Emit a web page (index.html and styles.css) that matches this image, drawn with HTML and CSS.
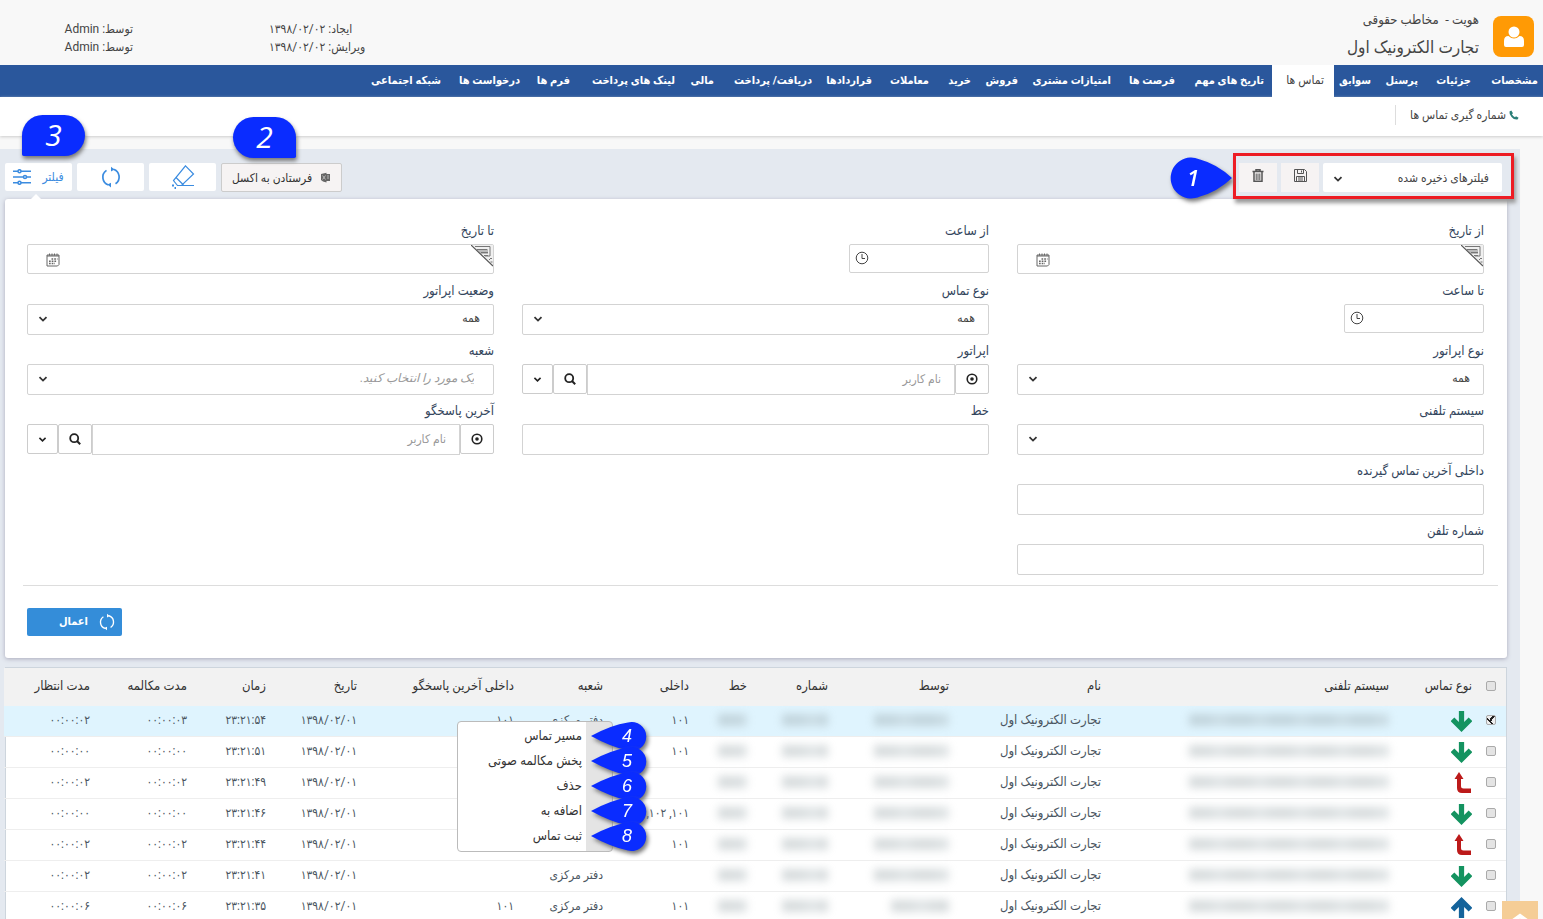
FILE: index.html
```
<!DOCTYPE html>
<html lang="fa" dir="rtl">
<head>
<meta charset="utf-8">
<title>تماس ها</title>
<link rel="stylesheet" href="styles.css">
</head>
<body>
<svg class="sprite" aria-hidden="true">
  <symbol id="chev" viewBox="0 0 10 8"><path d="M1.5 2.2 5 5.6 8.5 2.2" fill="none" stroke="currentColor" stroke-width="1.800"/></symbol>
  <symbol id="target" viewBox="0 0 12 12"><circle cx="6" cy="6" r="4.8" fill="none" stroke="currentColor" stroke-width="1.6"/><circle cx="6" cy="6" r="1.8" fill="currentColor"/></symbol>
  <symbol id="search" viewBox="0 0 12 12"><circle cx="5.2" cy="5.2" r="4" fill="none" stroke="currentColor" stroke-width="1.8"/><path d="m8 8 3.2 3.2" stroke="currentColor" stroke-width="2"/></symbol>
  <symbol id="cal" viewBox="0 0 14 14"><path d="M1 2h12v9.5L11.5 13H1z" fill="none" stroke="currentColor"/><path d="M1 3h12M3.500 .5v2M6 .5v2M8.500 .5v2M11 .5v2" stroke="currentColor"/><path d="M5.500 6h6M3 8.300h8M3 10.600h6" stroke="currentColor" stroke-width="1.500" stroke-dasharray="1.700 1"/></symbol>
  <symbol id="clock" viewBox="0 0 14 14"><circle cx="7" cy="7" r="5.8" fill="none" stroke="currentColor"/><path d="M7 3v4.500h3" fill="none" stroke="currentColor"/></symbol>
  <symbol id="corner" viewBox="0 0 22 22"><path d="M0 0h22v21z" fill="#f0f0f0"/><path d="M5 4h12v5h-7z" fill="#bbb"/><path d="M0 0 22 21" stroke="#555" stroke-width="1.200"/><path d="M4 1.500h15v9.500h-5M6 4.500h10M10 7.500h7M13 10.500h4M18 15l2-2 1 1M19.500 17h2" fill="none" stroke="#777"/></symbol>
  <symbol id="cycle" viewBox="0 0 20 22"><path d="M12.500 3.200A8.200 8.200 0 0 1 14.500 17.800M7.500 19A8.200 8.200 0 0 1 5.500 4.400" fill="none" stroke="currentColor" stroke-width="1.700"/><path d="M10 .8v4.600L13.500 3.500zM10 21.400v-4.600L6.500 18.600z" fill="currentColor"/></symbol>
  <symbol id="down" viewBox="0 0 20 20"><path d="M7.500 0h5v10.500l4.300-4.300L20.300 9.700 10 20 -.3 9.700 3.200 6.200 7.500 10.500z" fill="#149360"/></symbol>
  <symbol id="up" viewBox="0 0 20 20"><path d="M7.500 22V9.500L3.200 13.800 -.3 10.300 10 0l10.300 10.300-3.500 3.500-4.300-4.300V22z" fill="#14639b"/></symbol>
  <symbol id="miss" viewBox="0 0 20 22"><path d="M7 0l4.500 7H9v7q0 2.500 2.500 2.500H19V21h-9q-5 0-5-5V7H2.500z" fill="#bc1a1a"/></symbol>
  <symbol id="drop" viewBox="0 0 58 30"><path d="M0 14Q20 3 37 .5A14.500 14.500 0 1 1 37 28.500Q20 25 0 14z" fill="#0a2cff"/></symbol>
</svg>

<header class="head">
  <div class="avatar"><svg width="20" height="22" viewBox="0 0 20 22"><circle cx="10" cy="6" r="5.500" fill="#fff"/><path d="M0 19v-4q0-5 4.500-5Q10 15 15.500 10q4.500 0 4.500 5v4q0 2-2 2H2q-2 0-2-2z" fill="#fff"/></svg></div>
  <div class="identity">
    <p class="kind">هویت -&nbsp; مخاطب حقوقی</p>
    <h1>تجارت الکترونیک اول</h1>
  </div>
  <div class="meta made"><p>ایجاد: ۱۳۹۸/۰۲/۰۲</p><p>ویرایش: ۱۳۹۸/۰۲/۰۲</p></div>
  <div class="meta by"><p>توسط: Admin</p><p>توسط: Admin</p></div>
</header>

<nav class="tabs">
  <a href="#">مشخصات</a><a href="#">جزئیات</a><a href="#">پرسنل</a><a href="#">سوابق</a><a href="#" class="on">تماس ها</a><a href="#" class="next">تاریخ های مهم</a><a href="#">فرصت ها</a><a href="#">امتیازات مشتری</a><a href="#">فروش</a><a href="#">خرید</a><a href="#">معاملات</a><a href="#">قراردادها</a><a href="#">دریافت/ پرداخت</a><a href="#">مالی</a><a href="#">لینک های پرداخت</a><a href="#">فرم ها</a><a href="#">درخواست ها</a><a href="#">شبکه اجتماعی</a>
</nav>

<div class="subbar">
  <a href="#"><svg width="10" height="10" viewBox="0 0 10 10"><path d="M.5 1.500 2.300.5 4 3.200 2.900 4.300Q4 6.300 6 7.200L7 6.200 9.600 7.700 8.500 9.500Q5 10 2.500 7 0 4.500 .5 1.500z" fill="#2b7f78"/></svg>شماره گیری تماس ها</a>
</div>

<main class="work">
  <div class="toolbar">
    <div class="saved">
      <div class="pick"><select aria-label="فیلترهای ذخیره شده"><option>فیلترهای ذخیره شده</option></select><svg width="10" height="8"><use href="#chev"/></svg></div>
      <button class="sq" aria-label="ذخیره"><svg width="13" height="13" viewBox="0 0 13 13" fill="none" stroke="#555"><path d="M.5.5h10L12.500 2.500v10H.5zM3.500.5v4h6v-4M7.500 1.500v2M2.500 12.500v-5h8v5M4 9h5M4 11h5"/></svg></button>
      <button class="sq" aria-label="حذف"><svg width="12" height="13" viewBox="0 0 12 13" fill="none" stroke="#555"><path d="M.5 2.500h11M4 2V.8h4V2M2 3v9.300h8V3" stroke-width="1.500"/><path d="M4.200 4.500v6.500M6 4.500v6.500M7.800 4.500v6.500"/></svg></button>
      <span class="drop one"><svg width="64" height="42" viewBox="0 0 64 42"><path d="M64 21Q49 7 32 2.500A20.500 20.500 0 1 0 32 39.500Q49 35 64 21z" fill="#0a2cff"/></svg><b>1</b></span>
    </div>
    <div class="actions">
      <button class="excel"><svg width="11" height="11" viewBox="0 0 11 11"><path d="M1 2 6.500.8V2H10v7H6.500v1.500L3 9.500 1 8z" fill="#666"/><path d="m2.500 3.500 3 4m0-4-3 4M7 4h2M7 6h2" stroke="#ccc" stroke-width=".8"/></svg>فرستادن به اکسل</button>
      <button class="act" aria-label="پاک کردن"><svg width="24" height="24" viewBox="0 0 24 24" fill="none" stroke="#3b8ce0" stroke-width="1.200"><path d="M14.500.8 22.500 9 10.500 20.500H6.500L2.500 15.500zM5 12.500 12.500 20M10 20.500h13"/><path d="M1 20.500h2M3.500 23h1.500" stroke-width="1.800"/></svg></button>
      <button class="act" aria-label="بازخوانی"><svg width="20" height="22"><use href="#cycle"/></svg></button>
      <button class="act open">فیلتر<svg width="18" height="16" viewBox="0 0 18 16" fill="#fff" stroke="#3b8ce0" stroke-width="1.500"><path d="M0 2.200h18M0 8h18M0 13.800h18"/><circle cx="6.500" cy="2.200" r="1.500"/><circle cx="12" cy="8" r="1.500"/><circle cx="6.500" cy="13.800" r="1.500"/></svg></button>
      <b class="tag two">2</b>
      <b class="tag three">3</b>
    </div>
  </div>

  <form class="panel">
    <div class="fields">
      <div class="f"><label for="a1">از تاریخ</label><div class="box date"><input id="a1"><svg class="ic" width="14" height="14"><use href="#cal"/></svg><svg class="cr" width="22" height="22"><use href="#corner"/></svg></div></div>
      <div class="f"><label for="a2">از ساعت</label><div class="box time"><input id="a2"><svg class="ic" width="14" height="14"><use href="#clock"/></svg></div></div>
      <div class="f"><label for="a3">تا تاریخ</label><div class="box date"><input id="a3"><svg class="ic" width="14" height="14"><use href="#cal"/></svg><svg class="cr" width="22" height="22"><use href="#corner"/></svg></div></div>

      <div class="f"><label for="b1">تا ساعت</label><div class="box time"><input id="b1"><svg class="ic" width="14" height="14"><use href="#clock"/></svg></div></div>
      <div class="f"><label for="b2">نوع تماس</label><div class="box"><select id="b2"><option>همه</option></select><svg class="ar" width="10" height="8"><use href="#chev"/></svg></div></div>
      <div class="f"><label for="b3">وضعیت اپراتور</label><div class="box"><select id="b3"><option>همه</option></select><svg class="ar" width="10" height="8"><use href="#chev"/></svg></div></div>

      <div class="f"><label for="c1">نوع اپراتور</label><div class="box"><select id="c1"><option>همه</option></select><svg class="ar" width="10" height="8"><use href="#chev"/></svg></div></div>
      <div class="f"><label for="c2">اپراتور</label><div class="user"><button type="button" aria-label="انتخاب"><svg width="12" height="12"><use href="#target"/></svg></button><input id="c2" placeholder="نام کاربر"><button type="button" aria-label="جستجو"><svg width="12" height="12"><use href="#search"/></svg></button><button type="button" aria-label="فهرست"><svg width="9" height="7"><use href="#chev"/></svg></button></div></div>
      <div class="f"><label for="c3">شعبه</label><div class="box"><select id="c3" class="hint"><option>یک مورد را انتخاب کنید.</option></select><svg class="ar" width="10" height="8"><use href="#chev"/></svg></div></div>

      <div class="f"><label for="d1">سیستم تلفنی</label><div class="box"><select id="d1"><option></option></select><svg class="ar" width="10" height="8"><use href="#chev"/></svg></div></div>
      <div class="f"><label for="d2">خط</label><div class="box"><input id="d2"></div></div>
      <div class="f"><label for="d3">آخرین پاسخگو</label><div class="user"><button type="button" aria-label="انتخاب"><svg width="12" height="12"><use href="#target"/></svg></button><input id="d3" placeholder="نام کاربر"><button type="button" aria-label="جستجو"><svg width="12" height="12"><use href="#search"/></svg></button><button type="button" aria-label="فهرست"><svg width="9" height="7"><use href="#chev"/></svg></button></div></div>

      <div class="f first"><label for="e1">داخلی آخرین تماس گیرنده</label><div class="box"><input id="e1"></div></div>
      <div class="f first"><label for="g1">شماره تلفن</label><div class="box"><input id="g1"></div></div>
    </div>
    <div class="foot"><button type="button" class="apply"><svg width="16" height="18"><use href="#cycle"/></svg>اعمال</button></div>
  </form>

  <div class="grid">
    <table>
      <colgroup><col class="w0"><col class="w1"><col class="w2"><col class="w3"><col class="w4"><col class="w5"><col class="w6"><col class="w7"><col class="w8"><col class="w9"><col class="w10"><col class="w11"><col class="w12"><col class="w13"></colgroup>
      <thead><tr><th><input type="checkbox" aria-label="همه"></th><th>نوع تماس</th><th>سیستم تلفنی</th><th>نام</th><th>توسط</th><th>شماره</th><th>خط</th><th>داخلی</th><th>شعبه</th><th>داخلی آخرین پاسخگو</th><th>تاریخ</th><th>زمان</th><th>مدت مکالمه</th><th>مدت انتظار</th></tr></thead>
      <tbody>
        <tr class="sel"><td><input type="checkbox" checked aria-label="ردیف ۱"></td><td><svg width="21" height="21"><use href="#down"/></svg></td><td><i class="veil v1"></i></td><td class="name">تجارت الکترونیک اول</td><td><i class="veil v2"></i></td><td><i class="veil v3"></i></td><td><i class="veil v4"></i></td><td>۱۰۱</td><td>دفتر مرکزی</td><td>۱۰۱</td><td>۱۳۹۸/۰۲/۰۱</td><td>۲۳:۲۱:۵۴</td><td>۰۰:۰۰:۰۳</td><td>۰۰:۰۰:۰۲</td></tr>
        <tr><td><input type="checkbox" aria-label="ردیف ۲"></td><td><svg width="21" height="21"><use href="#down"/></svg></td><td><i class="veil v1"></i></td><td class="name">تجارت الکترونیک اول</td><td><i class="veil v2"></i></td><td><i class="veil v3"></i></td><td><i class="veil v4"></i></td><td>۱۰۱</td><td></td><td></td><td>۱۳۹۸/۰۲/۰۱</td><td>۲۳:۲۱:۵۱</td><td>۰۰:۰۰:۰۰</td><td>۰۰:۰۰:۰۰</td></tr>
        <tr><td><input type="checkbox" aria-label="ردیف ۳"></td><td><svg width="20" height="22"><use href="#miss"/></svg></td><td><i class="veil v1"></i></td><td class="name">تجارت الکترونیک اول</td><td><i class="veil v2"></i></td><td><i class="veil v3"></i></td><td><i class="veil v4"></i></td><td></td><td></td><td></td><td>۱۳۹۸/۰۲/۰۱</td><td>۲۳:۲۱:۴۹</td><td>۰۰:۰۰:۰۲</td><td>۰۰:۰۰:۰۲</td></tr>
        <tr><td><input type="checkbox" aria-label="ردیف ۴"></td><td><svg width="21" height="21"><use href="#down"/></svg></td><td><i class="veil v1"></i></td><td class="name">تجارت الکترونیک اول</td><td><i class="veil v2"></i></td><td><i class="veil v3"></i></td><td><i class="veil v4"></i></td><td>۱۰۱, ۱۰۲, ۱</td><td></td><td></td><td>۱۳۹۸/۰۲/۰۱</td><td>۲۳:۲۱:۴۶</td><td>۰۰:۰۰:۰۰</td><td>۰۰:۰۰:۰۰</td></tr>
        <tr><td><input type="checkbox" aria-label="ردیف ۵"></td><td><svg width="20" height="22"><use href="#miss"/></svg></td><td><i class="veil v1"></i></td><td class="name">تجارت الکترونیک اول</td><td><i class="veil v2"></i></td><td><i class="veil v3"></i></td><td><i class="veil v4"></i></td><td>۱۰۱</td><td></td><td></td><td>۱۳۹۸/۰۲/۰۱</td><td>۲۳:۲۱:۴۴</td><td>۰۰:۰۰:۰۲</td><td>۰۰:۰۰:۰۲</td></tr>
        <tr><td><input type="checkbox" aria-label="ردیف ۶"></td><td><svg width="21" height="21"><use href="#down"/></svg></td><td><i class="veil v1"></i></td><td class="name">تجارت الکترونیک اول</td><td><i class="veil v2"></i></td><td><i class="veil v3"></i></td><td><i class="veil v4"></i></td><td></td><td>دفتر مرکزی</td><td></td><td>۱۳۹۸/۰۲/۰۱</td><td>۲۳:۲۱:۴۱</td><td>۰۰:۰۰:۰۲</td><td>۰۰:۰۰:۰۲</td></tr>
        <tr><td><input type="checkbox" aria-label="ردیف ۷"></td><td><svg width="21" height="21"><use href="#up"/></svg></td><td><i class="veil v1"></i></td><td class="name">تجارت الکترونیک اول</td><td><i class="veil v5"></i></td><td><i class="veil v3"></i></td><td><i class="veil v4"></i></td><td>۱۰۱</td><td>دفتر مرکزی</td><td>۱۰۱</td><td>۱۳۹۸/۰۲/۰۱</td><td>۲۳:۲۱:۳۵</td><td>۰۰:۰۰:۰۶</td><td>۰۰:۰۰:۰۶</td></tr>
      </tbody>
    </table>
    <ul class="menu">
      <li>مسیر تماس<span class="drop"><svg width="58" height="30"><use href="#drop"/></svg><b>4</b></span></li>
      <li>پخش مکالمه صوتی<span class="drop"><svg width="58" height="30"><use href="#drop"/></svg><b>5</b></span></li>
      <li>حذف<span class="drop"><svg width="58" height="30"><use href="#drop"/></svg><b>6</b></span></li>
      <li>اضافه به<span class="drop"><svg width="58" height="30"><use href="#drop"/></svg><b>7</b></span></li>
      <li>ثبت تماس<span class="drop"><svg width="58" height="30"><use href="#drop"/></svg><b>8</b></span></li>
    </ul>
  </div>
</main>
<button class="totop" aria-label="بالا"><svg width="16" height="10" viewBox="0 0 16 10"><path d="M1 11 8 6l7 5" fill="none" stroke="#fff" stroke-width="4"/></svg></button>
</body>
</html>
```
FILE: styles.css
```
* { box-sizing: border-box; }
html { scrollbar-width: none; }
body {
  margin: 0;
  background: #f8f8f8;
  color: #444;
  font: 12px/18px Roboto, "DejaVu Sans Condensed", "DejaVu Sans", sans-serif;
}
p, h1, ul { margin: 0; padding: 0; }
a { color: inherit; text-decoration: none; }
button, input, select { font: inherit; color: inherit; margin: 0; }
svg { display: block; flex: none; }
.sprite { position: absolute; width: 0; height: 0; }

.head { display: flex; height: 65px; padding: 0 9px 0 65px; }
.avatar {
  width: 41px; height: 41px; margin-top: 16px;
  border-radius: 8px; background: #ff9a05;
  display: flex; align-items: center; justify-content: center;
}
.identity { padding: 11px 14px 0 0; }
.kind { font-size: 13px; }
.identity h1 { font-size: 17px; line-height: 24px; font-weight: 400; margin-top: 6px; }
.meta { padding-top: 20px; white-space: nowrap; text-align: left; }
.made { margin-right: auto; width: 98px; margin-left: 136px; }
.by { width: 68px; }

.tabs {
  display: grid; height: 32px;
  grid-template-columns: 67fr 53fr 47fr 42fr 62fr 92fr 64fr 93fr 47fr 42fr 57fr 60fr 98fr 39fr 105fr 50fr 79fr 446fr;
  background: #2a579c; color: #fff; font-size: 11px; font-weight: 700; line-height: 31px;
}
.tabs a { min-width: 0; padding-right: 5px; white-space: nowrap; }
.tabs .on { background: #fff; color: #444; font-weight: 400; padding-right: 10px; font-size: 12px; }
.tabs .next { padding-right: 8px; }

.subbar { height: 39px; padding: 8px 24px 0; background: #fff; box-shadow: 0 1px 3px #ccc; }
.subbar a { display: inline-flex; align-items: center; gap: 3px; height: 20px; padding-left: 14px; border-left: 1px solid #ddd; }

.work { margin: 13px 23px 0 0; padding: 0 13px 0 5px; background: #e4e9f0; }
.toolbar { display: flex; justify-content: space-between; padding-top: 4px; height: 50px; margin-right: -7px; }
.saved {
  position: relative; display: flex; gap: 4px; width: 281px; height: 46px;
  padding: 7px 9px 0 0; border: 3px solid #ed1c24; box-shadow: 2px 4px 4px #999;
}
.pick { position: relative; width: 179px; height: 29px; }
.pick select { appearance: none; width: 100%; height: 100%; border: 0; border-radius: 2px; background: #fff; padding: 0 13px; }
.pick svg { position: absolute; left: 10px; top: 12px; color: #333; }
.sq { width: 38px; height: 29px; padding: 0 0 5px; border: 0; background: #f6f3f3; display: flex; align-items: center; justify-content: center; }
.drop { position: absolute; filter: drop-shadow(2px 3px 2px #777); color: #fff; }
.drop b { position: absolute; font-family: "Open Sans", sans-serif; font-style: italic; }
.one { right: 279px; top: 1px; }
.one b { left: 19px; top: 8px; font-size: 22px; line-height: 24px; font-weight: 600; }

.actions { position: relative; display: flex; gap: 5px; padding-top: 10px; height: 38px; }
.actions button { display: flex; align-items: center; justify-content: center; border: 0; border-radius: 2px; background: #fff; color: #3b8ce0; padding: 0; }
.actions .excel { width: 121px; height: 29px; gap: 8px; background: #f6f3f3; border: 1px solid #ccc; color: #333; white-space: nowrap; }
.act { width: 67px; height: 28px; }
.actions .open { gap: 11px; position: relative; }
.open::after { content: ""; position: absolute; top: 31px; left: 25px; border: 6px solid transparent; border-top: 0; border-bottom-color: #fff; }
.tag {
  position: absolute; top: -36px; width: 63px; height: 41px;
  background: #0a2cff; color: #fff; text-align: center;
  font: italic 500 30px/40px "Open Sans", sans-serif; box-shadow: 1px 3px 4px #777;
}
.two { left: 228px; border-radius: 24px 24px 2px 24px; }
.three { left: 17px; top: -38px; border-radius: 24px 24px 24px 2px; }

.panel { background: #fff; border-radius: 3px; box-shadow: 0 1px 4px #aab; padding: 23px 9px 22px 18px; height: 459px; }
.fields { display: grid; grid-template-columns: repeat(3, 1fr); column-gap: 28px; row-gap: 7px; padding: 0 14px 10px 4px; border-bottom: 1px solid #ddd; }
.f { height: 53px; }
.first { grid-column: 1; }
.f label { display: block; height: 22px; line-height: 18px; font-size: 13px; color: #33455c; }
.box { position: relative; height: 31px; }
.box input, .box select { appearance: none; width: 100%; height: 100%; padding: 0 13px 4px; border: 1px solid #d3d3d3; border-radius: 2px; background: #fff; display: block; }
.box .hint { font-style: italic; color: #999; padding-right: 19px; }
.ar { position: absolute; left: 11px; top: 11px; color: #333; }
.time { width: 140px; height: 29px; }
.time .ic { position: absolute; left: 6px; top: 7px; }
.date { height: 30px; }
.date .ic { position: absolute; left: 19px; top: 9px; color: #666; }
.cr { position: absolute; right: 1px; top: 1px; }
.user { display: flex; height: 31px; }
.user input { flex: 1; min-width: 0; border: 1px solid #d3d3d3; padding: 0 13px 2px; }
.user input::placeholder { color: #999; }
.user button { width: 34px; height: 30px; padding: 0; border: 1px solid #ccc; border-radius: 2px; background: #fff; color: #222; display: flex; align-items: center; justify-content: center; }
.user button:last-child { width: 31px; }
.foot { display: flex; justify-content: flex-end; padding: 22px 0 0 4px; }
.apply { width: 95px; height: 28px; border: 0; border-radius: 2px; background: #348dd9; color: #fff; font-weight: 700; font-size: 11px; display: flex; align-items: center; gap: 11px; padding: 0 7px; }

.grid { position: relative; margin-top: 9px; border: 1px solid #cdd5dd; background: #fff; }
table { width: 100%; table-layout: fixed; border-collapse: separate; border-spacing: 0; }
th, td { padding: 0; text-align: right; white-space: nowrap; }
th { height: 38px; padding-bottom: 2px; background: #f2f2f2; color: #333; font-size: 13px; font-weight: 400; }
td { height: 31px; padding-bottom: 3px; border-bottom: 1px solid #eee; color: #4a5560; }
.name { font-size: 13px; }
.sel td { background: #dff4fe; }
td svg { margin-top: 3px; }
input[type=checkbox] { appearance: none; display: block; width: 10px; height: 10px; margin: 0 10px 0 0; border: 1px solid #aaa; border-radius: 2px; background: #e4e4e4; }
input[type=checkbox]:checked { background: linear-gradient(45deg, #eee 20%, #eee 30%, #222 30% 40%, transparent 40%), linear-gradient(-55deg, #eee 42%, #222 42% 62%, #eee 62%); }
.veil { display: block; height: 12px; background: repeating-linear-gradient(90deg, #8d9b9f 0 19px, #a3b0b4 27px 35px, #8d9b9f 41px); opacity: .35; filter: blur(4px); }
.v1 { width: 200px; } .v2 { width: 75px; } .v3 { width: 46px; } .v4 { width: 29px; } .v5 { width: 58px; }
.w0 { width: 34px; } .w1 { width: 83px; } .w2 { width: 288px; } .w3 { width: 152px; } .w4 { width: 121px; } .w5 { width: 81px; } .w6 { width: 58px; }
.w7 { width: 86px; } .w8 { width: 89px; } .w9 { width: 157px; } .w10 { width: 91px; } .w11 { width: 79px; } .w12 { width: 97px; } .w13 { width: 86px; }

.menu {
  position: absolute; left: 451px; top: 53px; width: 156px; padding: 2px 0; list-style: none;
  border: 1px solid #bbb; border-radius: 4px;
  background: linear-gradient(90deg, #fff 128px, #e4e4e4 128px);
}
.menu li { position: relative; height: 25px; padding-right: 30px; line-height: 24px; font-size: 13px; color: #333; }
.menu .drop { left: 133px; top: -2px; }
.menu b { left: 31px; top: 4px; font: italic 400 18px/20px "Liberation Sans", sans-serif; }

.totop { position: fixed; right: 5px; bottom: 0; width: 36px; height: 18px; border: 0; padding: 9px 0 0; background: #f5cd96; display: flex; justify-content: center; overflow: hidden; }
```
